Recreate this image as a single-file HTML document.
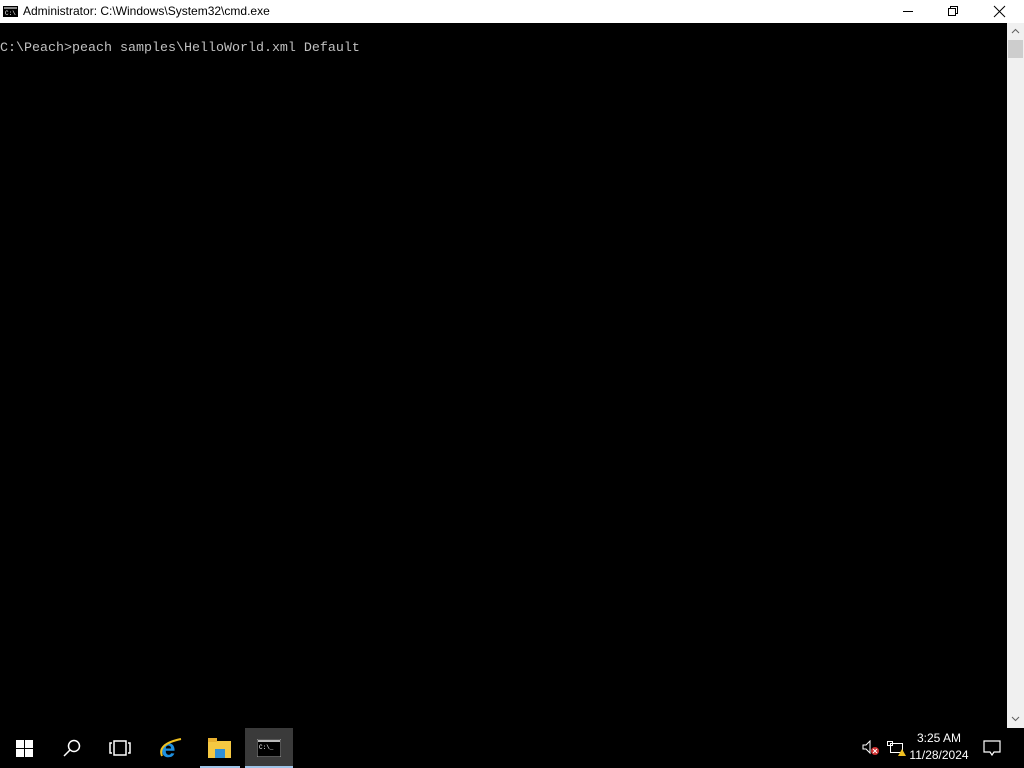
<!DOCTYPE html>
<html><head><style>
body{margin:0;width:1024px;height:768px;background:#000;position:relative;overflow:hidden;font-family:"Liberation Sans",sans-serif}
.tb{position:absolute;left:0;top:0;width:1024px;height:23px;background:#fff}
.title{position:absolute;left:23px;top:4px;font-size:12px;color:#000}
.con{position:absolute;left:0;top:41px;font-family:"Liberation Mono",monospace;font-size:13.33px;color:#c0c0c0;white-space:pre}
.sb{position:absolute;left:1007px;top:23px;width:17px;height:705px;background:#f0f0f0}
.thumb{position:absolute;left:1008px;top:40px;width:15px;height:18px;background:#cdcdcd}
.task{position:absolute;left:0;top:728px;width:1024px;height:40px;background:#000}
.clock{position:absolute;left:904px;top:732px;width:70px;text-align:center;color:#fff;font-size:12px;line-height:17px}
</style></head><body>
<div class="tb">
<svg style="position:absolute;left:3px;top:6px" width="15" height="11"><rect width="15" height="11" fill="#000"/><rect x="1" y="1" width="13" height="2" fill="#888"/><text x="2" y="9" font-size="6" fill="#fff" font-family="Liberation Mono">C:\</text></svg>
<div class="title">Administrator: C:\Windows\System32\cmd.exe</div>
<svg style="position:absolute;left:900px;top:5px" width="120" height="14" stroke="#000" fill="none" stroke-width="1"><line x1="3" y1="6.5" x2="13" y2="6.5"/><rect x="48.5" y="3.5" width="7" height="7"/><path d="M50.5 3.5V1.5h7v7h-2"/><path d="M94 1l11 11M105 1L94 12"/></svg>
</div>
<div class="con">C:\Peach&gt;peach samples\HelloWorld.xml Default</div>
<div class="sb"></div><div class="thumb"></div>
<svg style="position:absolute;left:1010px;top:27px" width="11" height="8" stroke="#606060" fill="none"><path d="M2 6l3.5-3.5L9 6"/></svg>
<svg style="position:absolute;left:1010px;top:715px" width="11" height="8" stroke="#606060" fill="none"><path d="M2 2l3.5 3.5L9 2"/></svg>
<div class="task">
<svg style="position:absolute;left:16px;top:12px" width="17" height="17" fill="#fff"><rect x="0" y="0" width="8" height="8"/><rect x="9" y="0" width="8" height="8"/><rect x="0" y="9" width="8" height="8"/><rect x="9" y="9" width="8" height="8"/></svg>
<svg style="position:absolute;left:62px;top:10px" width="20" height="20" stroke="#fff" fill="none" stroke-width="1.5"><circle cx="12" cy="8" r="5.5"/><path d="M8 12L2 18"/></svg>
<svg style="position:absolute;left:109px;top:12px" width="22" height="16" stroke="#fff" fill="none" stroke-width="1.5"><rect x="5" y="1" width="12" height="14"/><path d="M3 3H1v10h2M19 3h2v10h-2"/></svg>
<svg style="position:absolute;left:159px;top:8px" width="26" height="24"><text x="2" y="21" font-size="26" font-weight="bold" fill="#1e90e0" font-family="Liberation Sans">e</text><path d="M3 20Q-2 8 22 3" stroke="#f0c020" stroke-width="2" fill="none"/></svg>
<svg style="position:absolute;left:208px;top:10px" width="23" height="20"><rect x="0" y="3" width="23" height="17" fill="#f5c842"/><rect x="0" y="0" width="9" height="4" fill="#e8b030"/><rect x="7" y="11" width="10" height="9" fill="#2d8fd8"/></svg>
<div style="position:absolute;left:200px;top:38px;width:40px;height:2px;background:#9fc4e8"></div>
<div style="position:absolute;left:245px;top:0;width:48px;height:40px;background:#3a3a3a"></div>
<div style="position:absolute;left:245px;top:38px;width:48px;height:2px;background:#9fc4e8"></div>
<svg style="position:absolute;left:257px;top:11px" width="24" height="18"><rect width="24" height="18" fill="#000" stroke="#aaa"/><rect x="1" y="1" width="22" height="2" fill="#bbb"/><text x="2" y="10" font-size="6" fill="#fff" font-family="Liberation Mono">C:\_</text></svg>
<svg style="position:absolute;left:862px;top:12px" width="20" height="16"><path d="M1 5h3l4-4v12l-4-4H1z" stroke="#fff" fill="none"/><circle cx="13" cy="11" r="4" fill="#d03030"/><path d="M11 9l4 4M15 9l-4 4" stroke="#fff"/></svg>
<svg style="position:absolute;left:886px;top:12px" width="20" height="17"><rect x="1.5" y="1.5" width="5" height="4" stroke="#fff" fill="none"/><rect x="4.5" y="3.5" width="12" height="9" stroke="#fff" fill="none"/><path d="M12 16l4-7 4 7z" fill="#f0c020"/></svg>
<div class="clock" style="top:2px">3:25 AM<br>11/28/2024</div>
<svg style="position:absolute;left:983px;top:12px" width="18" height="17" stroke="#fff" fill="none" stroke-width="1.2"><path d="M1 1h16v11H11l-2 3-2-3H1z"/></svg>
</div>
</body></html>
